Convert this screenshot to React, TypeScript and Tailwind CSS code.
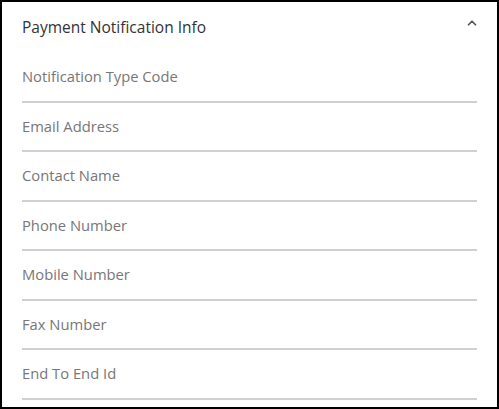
import { ChevronUp } from 'lucide-react';

const fields = [
  'Notification Type Code',
  'Email Address',
  'Contact Name',
  'Phone Number',
  'Mobile Number',
  'Fax Number',
  'End To End Id',
];

export default function App() {
  return (
    <div className="h-[409px] w-[499px] overflow-hidden border-2 border-black bg-white font-['Open_Sans',sans-serif]">
      <div className="px-[20px]">
        {/* Header */}
        <div className="flex h-[51px] items-center justify-between">
          <h2 className="text-[15.5px] text-[#333]">Payment Notification Info</h2>
          <ChevronUp className="mb-[10px] mr-[-2px] h-[14px] w-[14px] text-[#555]" strokeWidth={3} />
        </div>

        {/* Fields */}
        {fields.map((label) => (
          <div key={label} className="flex h-[49.5px] items-end border-b-2 border-[#d0d0d0] pb-[13px]">
            <span className="text-[14.75px] text-[#777]">{label}</span>
          </div>
        ))}
      </div>
    </div>
  );
}
